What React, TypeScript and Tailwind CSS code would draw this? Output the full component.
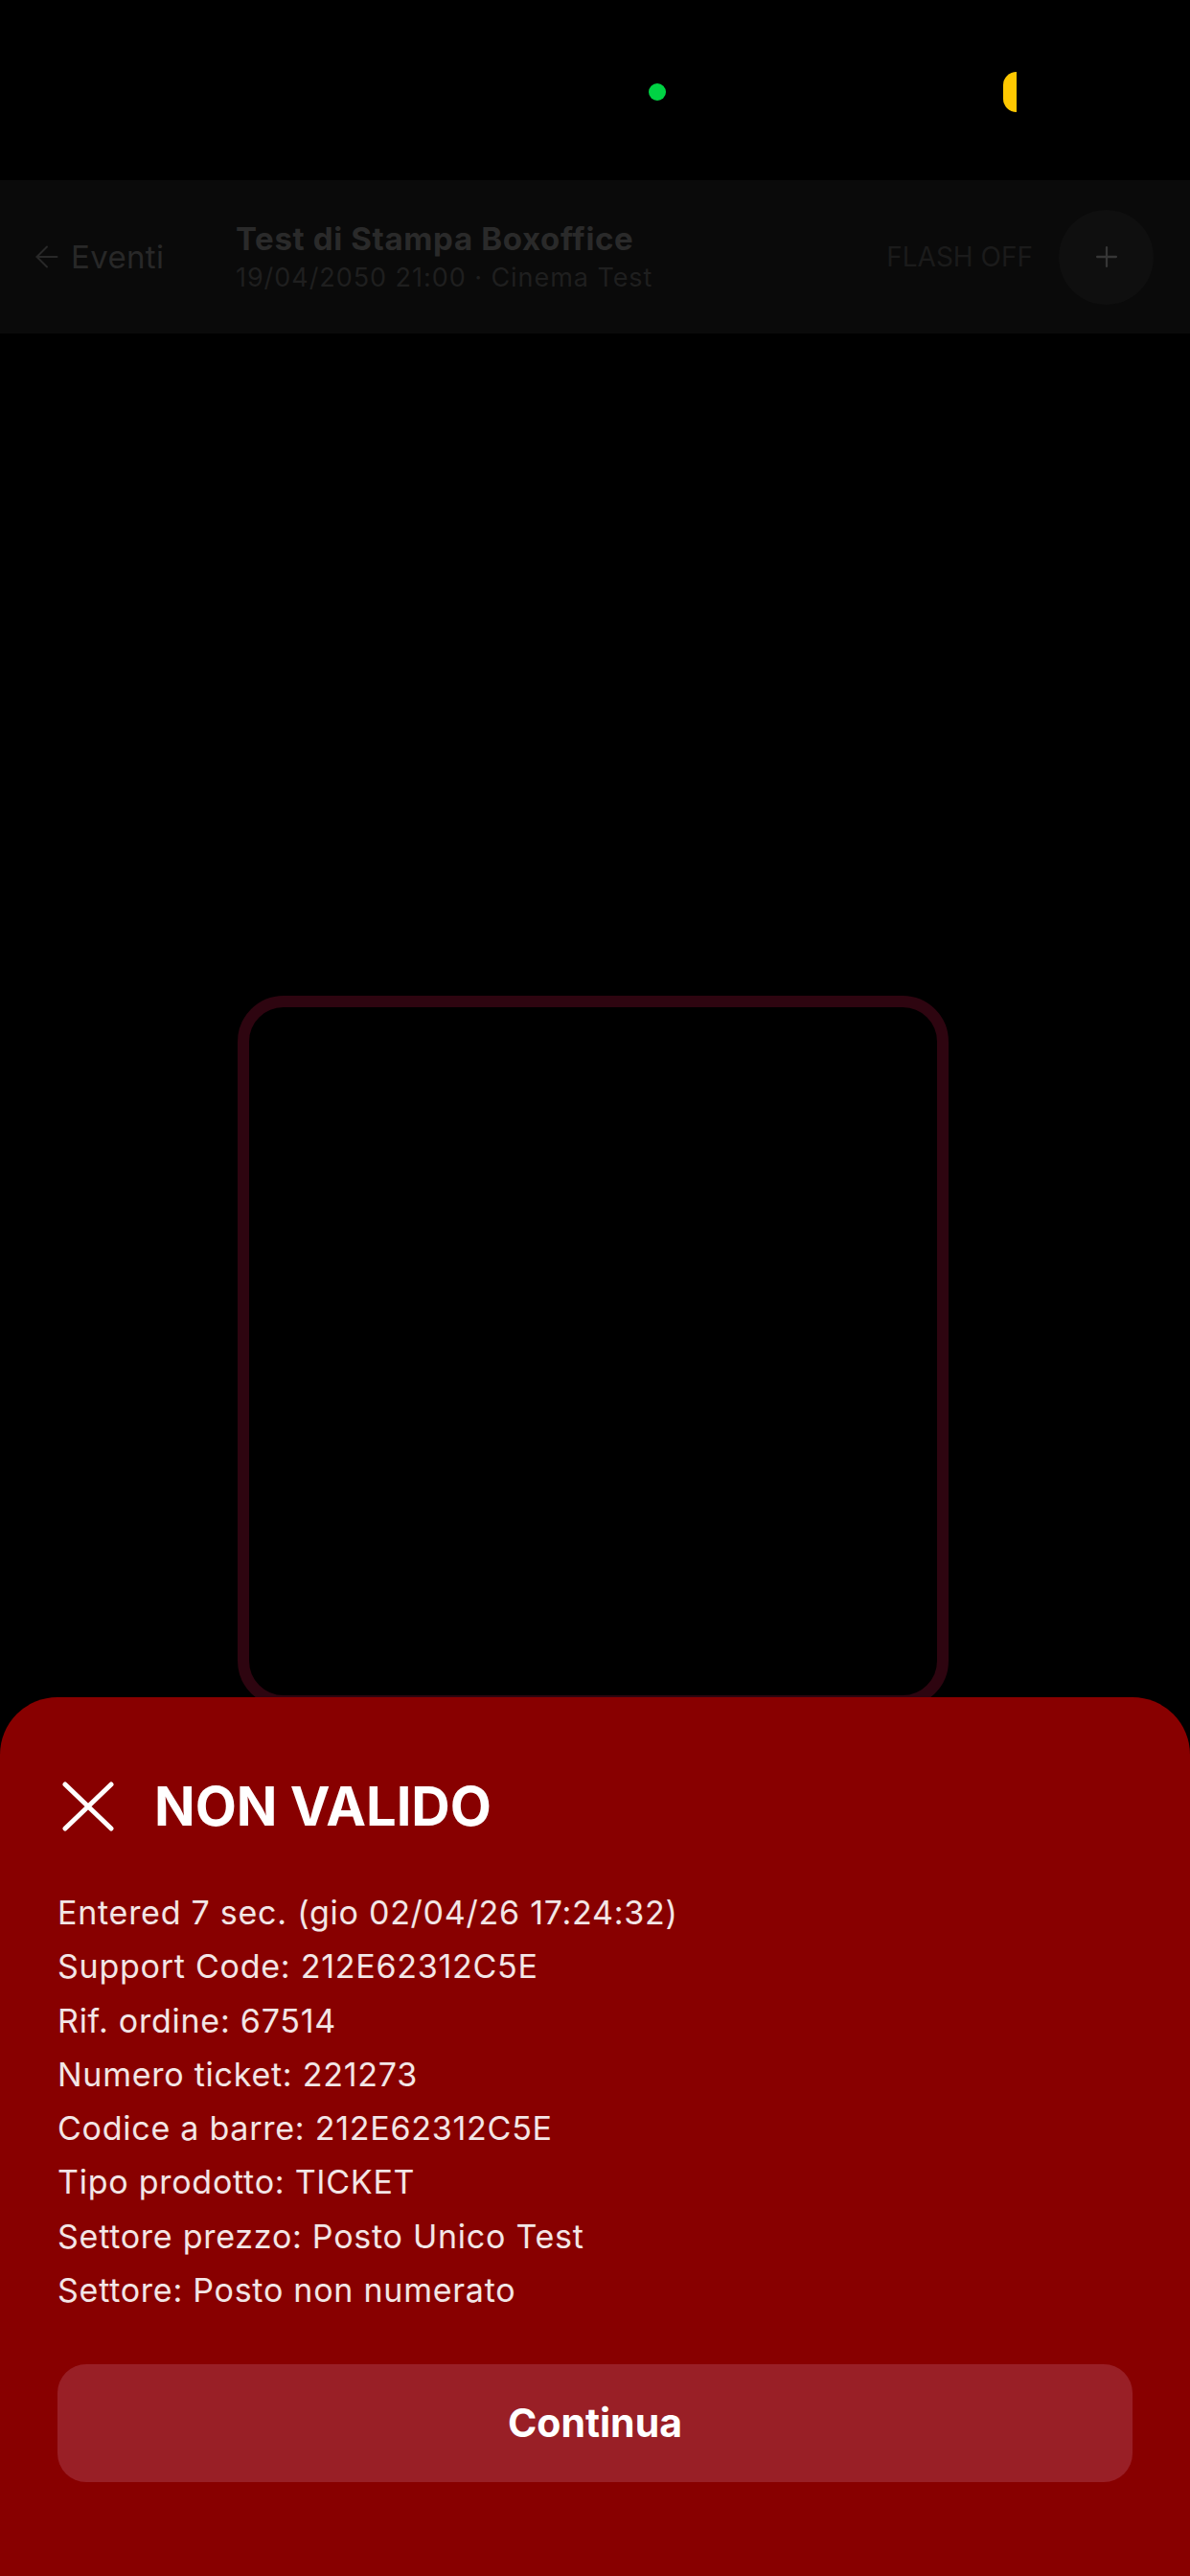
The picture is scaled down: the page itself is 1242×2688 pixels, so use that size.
import { ArrowLeft, Plus } from "lucide-react";

const details = [
  "Entered 7 sec. (gio 02/04/26 17:24:32)",
  "Support Code: 212E62312C5E",
  "Rif. ordine: 67514",
  "Numero ticket: 221273",
  "Codice a barre: 212E62312C5E",
  "Tipo prodotto: TICKET",
  "Settore prezzo: Posto Unico Test",
  "Settore: Posto non numerato",
];

function StatusBar() {
  return (
    <div className="flex h-[188px] items-center pt-[4px] pl-[677px]">
      <div className="h-[18px] w-[18px] rounded-full bg-[#00d344]" />
      <div className="ml-[352px] h-[42px] w-[14px] rounded-l-full bg-[#ffc800]" />
    </div>
  );
}

function Header() {
  return (
    <div className="flex h-[160px] items-center bg-[#0a0a0a]">
      <div className="flex w-[246px] items-center gap-[7px] pl-[31px] text-[#282828]">
        <ArrowLeft className="h-[36px] w-[36px]" strokeWidth={1.3} />
        <span className="text-[33px] leading-none tracking-[0.01em]">Eventi</span>
      </div>
      <div className="flex flex-col gap-[6px]">
        <span className="text-[33px] font-bold leading-[38px] tracking-[0.02em] text-[#2a2a2a]">
          Test di Stampa Boxoffice
        </span>
        <span className="text-[27px] leading-[32px] tracking-[0.035em] text-[#1f1f1f]">
          19/04/2050 21:00 · Cinema Test
        </span>
      </div>
      <div className="ml-auto flex items-center gap-[27px] pr-[38px]">
        <span className="text-[28px] leading-none text-[#1b1b1b]">FLASH OFF</span>
        <div className="flex h-[99px] w-[99px] items-center justify-center rounded-full bg-[#0f0f0f]">
          <Plus className="h-[34px] w-[34px] text-[#363636]" strokeWidth={1.6} />
        </div>
      </div>
    </div>
  );
}

function CloseMark() {
  return (
    <svg width="54" height="52" viewBox="0 0 54 52" className="shrink-0">
      <path d="M3 3 L51 49 M51 3 L3 49" stroke="white" strokeWidth="5" strokeLinecap="round" fill="none" />
    </svg>
  );
}

function ResultSheet() {
  return (
    <div className="absolute inset-x-0 bottom-0 flex h-[917px] flex-col rounded-t-[60px] bg-[#880000] px-[60px] pt-[82px]">
      <div className="flex items-center gap-[42px] pl-[5px]">
        <CloseMark />
        <span className="text-[56px] font-bold leading-[64px] text-white">NON VALIDO</span>
      </div>
      <div className="mt-[51px] flex flex-col">
        {details.map((line) => (
          <span key={line} className="text-[34px] leading-[56.3px] tracking-[0.022em] text-white/90">
            {line}
          </span>
        ))}
      </div>
      <button className="mt-[49px] flex h-[123px] w-full items-center justify-center rounded-[30px] bg-[#991f26] text-[41px] font-bold text-white">
        Continua
      </button>
    </div>
  );
}

export default function App() {
  return (
    <div
      className="relative flex h-[2688px] w-[1242px] flex-col overflow-hidden bg-black"
      style={{ fontFamily: "Inter, 'Liberation Sans', sans-serif" }}
    >
      <StatusBar />
      <Header />
      <div className="ml-[248px] mt-[691px] h-[742px] w-[742px] rounded-[48px] border-[12px] border-[#2e0510]" />
      <ResultSheet />
    </div>
  );
}
